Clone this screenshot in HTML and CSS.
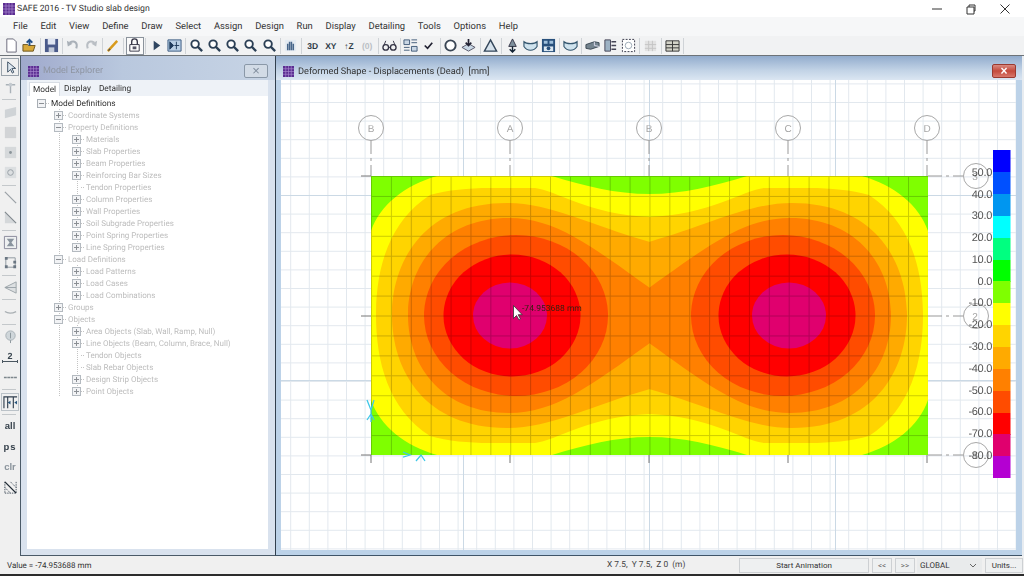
FILE: index.html
```html
<!DOCTYPE html>
<html lang="en">
<head>
<meta charset="utf-8">
<title>SAFE 2016 - TV Studio slab design</title>
<link rel="stylesheet" href="styles.css">
</head>
<body>
<svg class="defs" width="0" height="0" aria-hidden="true">
  <symbol id="appicon" viewBox="0 0 12 12">
    <rect width="12" height="12" fill="#5b2d91"/>
    <path d="M0 3h12M0 6h12M0 9h12M3 0v12M6 0v12M9 0v12" stroke="#a98bd0" stroke-width=".7"/>
  </symbol>
  <symbol id="zoom" viewBox="0 0 16 16">
    <circle cx="6.500" cy="6.500" r="4" fill="#fff" stroke="#2b3f55" stroke-width="2"/>
    <path d="M9.500 9.500l4.500 4.500" stroke="#2b3f55" stroke-width="2.400"/>
  </symbol>
  <symbol id="bowl" viewBox="0 0 16 16">
    <path d="M1 4c2 2 4 2 7 2s5 0 7-2v5c-2 3-4 4-7 4s-5-1-7-4z" fill="#cfe3ee" stroke="#33566e" stroke-width="1.200"/>
  </symbol>
</svg>

<header class="titlebar">
  <svg class="appicon"><use href="#appicon"/></svg>
  <span class="apptitle">SAFE 2016 - TV Studio slab design</span>
  <div class="winctl">
    <svg class="ctl" viewBox="0 0 12 12"><path d="M1 6h10" stroke="#333"/></svg>
    <svg class="ctl" viewBox="0 0 12 12"><path d="M2 4h7v7H2zM4 4V2h6v6H9" fill="none" stroke="#333"/></svg>
    <svg class="ctl" viewBox="0 0 12 12"><path d="M1.500 1.500l9 9M10.500 1.500l-9 9" stroke="#333"/></svg>
  </div>
</header>

<nav class="menubar">
  <span>File</span><span>Edit</span><span>View</span><span>Define</span><span>Draw</span><span>Select</span><span>Assign</span><span>Design</span><span>Run</span><span>Display</span><span>Detailing</span><span>Tools</span><span>Options</span><span>Help</span>
</nav>

<div class="toolbar">
  <i class="ti"><svg viewBox="0 0 16 16"><path d="M3 1h7l3 3v11H3z" fill="#fff" stroke="#667"/></svg></i>
  <i class="ti"><svg viewBox="0 0 16 16"><path d="M1 7h5l1 1h7l-2 6H1z" fill="#d8a93a" stroke="#6a5320"/><path d="M8 8V3M5 5l3-3 3 3" stroke="#1f4f8a" stroke-width="2" fill="none"/></svg></i>
  <b class="sep"></b>
  <i class="ti"><svg viewBox="0 0 16 16"><path d="M1 1h14v14H1z" fill="#4a5a8a"/><path d="M4 1h8v6H4z" fill="#dfe5f2"/><path d="M5 10h6v5H5z" fill="#c0c8d8"/></svg></i>
  <b class="sep"></b>
  <i class="ti"><svg viewBox="0 0 16 16"><path d="M5 5c5-3 9 0 7 6" fill="none" stroke="#a9b0b8" stroke-width="2.200"/><path d="M2 3l1 6 5-3z" fill="#a9b0b8"/></svg></i>
  <i class="ti"><svg viewBox="0 0 16 16"><path d="M11 5C6 2 2 5 4 11" fill="none" stroke="#b9bec4" stroke-width="2.200"/><path d="M14 3l-1 6-5-3z" fill="#b9bec4"/></svg></i>
  <b class="sep"></b>
  <i class="ti"><svg viewBox="0 0 16 16"><path d="M3 14L13 3" stroke="#d89a1c" stroke-width="2.600"/><path d="M3 14l1.500-3 1.500 1.500z" fill="#555"/></svg></i>
  <b class="sep"></b>
  <i class="ti ti-on"><svg viewBox="0 0 16 16"><path d="M3 7h10v7H3z" fill="#fff" stroke="#334"/><path d="M5 7V4a3 3 0 016 0v3" fill="none" stroke="#334" stroke-width="1.400"/><path d="M6 9h4v3H6z" fill="#556"/></svg></i>
  <b class="sep"></b>
  <i class="ti"><svg viewBox="0 0 16 16"><path d="M5 3l7 5-7 5z" fill="#2f4560"/></svg></i>
  <i class="ti"><svg viewBox="0 0 16 16"><path d="M1 2h14v12H1z" fill="#b8cfe6" stroke="#3a5a80"/><path d="M3 4l4 4-4 4zM10 4v8M13 8H8" stroke="#1d3a5c" fill="#1d3a5c"/></svg></i>
  <b class="sep"></b>
  <i class="ti"><svg><use href="#zoom"/></svg></i>
  <i class="ti"><svg><use href="#zoom"/></svg></i>
  <i class="ti"><svg><use href="#zoom"/></svg></i>
  <i class="ti"><svg><use href="#zoom"/></svg></i>
  <i class="ti"><svg><use href="#zoom"/></svg></i>
  <b class="sep"></b>
  <i class="ti"><svg viewBox="0 0 16 16"><path d="M2 2h12v12H2z" fill="#e4ebf2"/><path d="M5 13V6M7 13V4M9 13V4M11 13V6" stroke="#47668a" stroke-width="1.600"/></svg></i>
  <b class="sep"></b>
  <i class="ti tx">3D</i><i class="ti tx">XY</i><i class="ti tx">↑Z</i><i class="ti tx tx-off">(0)</i>
  <b class="sep"></b>
  <i class="ti"><svg viewBox="0 0 16 16"><circle cx="4" cy="10" r="3" fill="none" stroke="#334" stroke-width="1.400"/><circle cx="12" cy="10" r="3" fill="none" stroke="#334" stroke-width="1.400"/><path d="M7 10h2M2 8l2-5M14 8l-2-5" stroke="#334"/></svg></i>
  <b class="sep"></b>
  <i class="ti"><svg viewBox="0 0 16 16"><path d="M1 2h6v5H1zM9 9h6v5H9z" fill="#c9d6e4" stroke="#405a78"/><path d="M9 2h6M9 5h6M1 10h6M1 13h6" stroke="#405a78"/></svg></i>
  <i class="ti"><svg viewBox="0 0 16 16"><path d="M4 8l3 3 5-6" fill="none" stroke="#223" stroke-width="1.800"/></svg></i>
  <b class="sep"></b>
  <i class="ti"><svg viewBox="0 0 16 16"><circle cx="8" cy="8" r="5.500" fill="#fff" stroke="#3a4655" stroke-width="2"/></svg></i>
  <i class="ti"><svg viewBox="0 0 16 16"><path d="M8 6l7 4-7 4-7-4z" fill="#c9d8e6" stroke="#556"/><path d="M8 1v7M5 5l3 3 3-3" stroke="#223" stroke-width="1.800" fill="none"/></svg></i>
  <b class="sep"></b>
  <i class="ti"><svg viewBox="0 0 16 16"><path d="M8 2l6.500 12h-13z" fill="#d6e2ec" stroke="#33465a" stroke-width="1.500"/></svg></i>
  <b class="sep"></b>
  <i class="ti"><svg viewBox="0 0 16 16"><path d="M8 1L4 9h8z" fill="#7d8f9c" stroke="#334"/><path d="M8 9v6M5 12l3 3 3-3" stroke="#123" stroke-width="1.500" fill="none"/></svg></i>
  <i class="ti"><svg><use href="#bowl"/></svg></i>
  <i class="ti"><svg viewBox="0 0 16 16"><path d="M1 1h14v14H1z" fill="#28507c"/><path d="M3 9h10v5H3z" fill="#dce8f2"/><circle cx="8" cy="11" r="2" fill="#28507c"/><path d="M3 3h4v3H3zM9 3h4v3H9z" fill="#9fc0dc"/></svg></i>
  <b class="sep"></b>
  <i class="ti"><svg><use href="#bowl"/></svg></i>
  <b class="sep"></b>
  <i class="ti"><svg viewBox="0 0 16 16"><path d="M1 7l9-3 5 1v4l-9 3-5-1z" fill="#75848f" stroke="#3a4652"/><path d="M10 4v4l5 1" stroke="#dde" fill="none"/></svg></i>
  <i class="ti"><svg viewBox="0 0 16 16"><path d="M2 2h6v12H2z" fill="#9db2c4" stroke="#445"/><path d="M9 4h5M9 8h5M9 12h5" stroke="#445" stroke-width="1.500"/></svg></i>
  <i class="ti"><svg viewBox="0 0 16 16"><path d="M1.500 1.500h13v13h-13z" fill="#fff" stroke="#334" stroke-dasharray="2 1.500"/><circle cx="8" cy="8" r="3.500" fill="none" stroke="#9aa8b4"/></svg></i>
  <b class="sep"></b>
  <i class="ti"><svg viewBox="0 0 16 16"><path d="M2 3h12v11H2z" fill="#e2e2e2"/><path d="M2 7h12M2 11h12M6 3v11M10 3v11" stroke="#c4c4c4"/></svg></i>
  <b class="sep"></b>
  <i class="ti"><svg viewBox="0 0 16 16"><path d="M1 3h14v11H1z" fill="#d3d3c8" stroke="#333"/><path d="M8 3v11M1 7h14M1 10.500h14" stroke="#333"/></svg></i>
  <b class="sep"></b>
</div>

<main class="workspace">
  <aside class="sidetools">
    <i class="si si-on"><svg viewBox="0 0 16 16"><path d="M5 2v11l3-3 2 4 1.500-1-2-4h4z" fill="#dfe8f0" stroke="#3d4f62"/></svg></i>
    <i class="si"><svg viewBox="0 0 16 16"><path d="M3 5h10M8 5v9" stroke="#aab2b8" stroke-width="1.500"/><circle cx="8" cy="5" r="2" fill="#c5cbd0"/></svg></i>
    <b class="hsep"></b>
    <i class="si"><svg viewBox="0 0 16 16"><path d="M2 5l12-3v9l-12 3z" fill="#cfd3d6"/></svg></i>
    <i class="si"><svg viewBox="0 0 16 16"><path d="M2 2h12v12H2z" fill="#d2d4d6"/></svg></i>
    <i class="si"><svg viewBox="0 0 16 16"><path d="M2 2h12v12H2z" fill="#d6d9db"/><circle cx="8" cy="8" r="1.500" fill="#8b949a"/></svg></i>
    <i class="si"><svg viewBox="0 0 16 16"><path d="M2 2h12v12H2z" fill="#dcdfe1"/><circle cx="8" cy="8" r="3" fill="none" stroke="#969ea4"/></svg></i>
    <b class="hsep"></b>
    <i class="si"><svg viewBox="0 0 16 16"><path d="M2 2l12 12" stroke="#9aa1a6" stroke-width="1.400"/></svg></i>
    <i class="si"><svg viewBox="0 0 16 16"><path d="M2 2v12h12z" fill="#d5d8da"/><path d="M2 2l12 12" stroke="#7f878c" stroke-width="1.200"/></svg></i>
    <b class="hsep"></b>
    <i class="si"><svg viewBox="0 0 16 16"><path d="M1.500 1.500h13v13h-13z" fill="#eef0f1" stroke="#889"/><path d="M4 4h8L9 8l3 4H4l3-4z" fill="#8a949e"/></svg></i>
    <i class="si"><svg viewBox="0 0 16 16"><path d="M3 3h10v10H3z" fill="none" stroke="#8d969e"/><path d="M2 2h3v3H2zM11 6h3v3h-3zM2 11h3v3H2zM11 11h3v3h-3z" fill="#6a7682"/></svg></i>
    <b class="hsep"></b>
    <i class="si"><svg viewBox="0 0 16 16"><path d="M2 8l12-6v12z" fill="#dde0e2" stroke="#9aa2a8"/><path d="M2 8h12" stroke="#9aa2a8"/></svg></i>
    <b class="hsep"></b>
    <i class="si"><svg viewBox="0 0 16 16"><path d="M2 7c3 2 8 2 12 0" fill="none" stroke="#a9afb3" stroke-width="1.400"/></svg></i>
    <b class="hsep"></b>
    <i class="si"><svg viewBox="0 0 16 16"><circle cx="8" cy="7" r="5" fill="#cfd6da" stroke="#a8b0b5"/><path d="M8 4v6M8 12v3" stroke="#8a949a"/></svg></i>
    <i class="si si-num">2</i>
    <i class="si"><svg viewBox="0 0 16 16"><path d="M1 8h14" stroke="#7d868c" stroke-width="1.800" stroke-dasharray="3 .6"/></svg></i>
    <b class="hsep"></b>
    <i class="si si-box"><svg viewBox="0 0 16 16"><path d="M1 14V2h14M5 2v12M11 2v12" fill="none" stroke="#2f3d4c" stroke-width="1.200"/><path d="M5 8l3-2v4zM15 6l-3 2 3 2z" fill="#28557c"/></svg></i>
    <b class="hsep"></b>
    <i class="si si-txt">all</i>
    <i class="si si-txt si-wide">ps</i>
    <i class="si si-txt si-dim">clr</i>
    <i class="si"><svg viewBox="0 0 16 16"><path d="M2 2l12 12M2 14h12M2 2v12M14 2v12M8 2l6 6M2 8l6 6" fill="none" stroke="#475360" stroke-dasharray="1.500 1"/><path d="M2 2l12 12" stroke="#222c36" stroke-width="1.500"/></svg></i>
  </aside>

  <section class="explorer">
    <div class="explorer-title">
      <svg class="winicon"><use href="#appicon"/></svg>
      <span class="explorer-name">Model Explorer</span>
      <button class="explorer-close" type="button">×</button>
    </div>
    <div class="tabs">
      <span class="tab tab-on">Model</span><span class="tab">Display</span><span class="tab">Detailing</span>
    </div>
    <div class="treepane">
      <ul class="tree root">
        <li><div class="row row-main"><span class="box minus"></span><span class="dash"></span>Model Definitions</div>
          <ul class="tree">
            <li><div class="row"><span class="box plus"></span><span class="dash"></span>Coordinate Systems</div></li>
            <li><div class="row"><span class="box minus"></span><span class="dash"></span>Property Definitions</div>
              <ul class="tree">
                <li><div class="row"><span class="box plus"></span><span class="dash"></span>Materials</div></li>
                <li><div class="row"><span class="box plus"></span><span class="dash"></span>Slab Properties</div></li>
                <li><div class="row"><span class="box plus"></span><span class="dash"></span>Beam Properties</div></li>
                <li><div class="row"><span class="box plus"></span><span class="dash"></span>Reinforcing Bar Sizes</div></li>
                <li><div class="row"><span class="nobox"></span><span class="dash"></span>Tendon Properties</div></li>
                <li><div class="row"><span class="box plus"></span><span class="dash"></span>Column Properties</div></li>
                <li><div class="row"><span class="box plus"></span><span class="dash"></span>Wall Properties</div></li>
                <li><div class="row"><span class="box plus"></span><span class="dash"></span>Soil Subgrade Properties</div></li>
                <li><div class="row"><span class="box plus"></span><span class="dash"></span>Point Spring Properties</div></li>
                <li><div class="row"><span class="box plus"></span><span class="dash"></span>Line Spring Properties</div></li>
              </ul>
            </li>
            <li><div class="row"><span class="box minus"></span><span class="dash"></span>Load Definitions</div>
              <ul class="tree">
                <li><div class="row"><span class="box plus"></span><span class="dash"></span>Load Patterns</div></li>
                <li><div class="row"><span class="box plus"></span><span class="dash"></span>Load Cases</div></li>
                <li><div class="row"><span class="box plus"></span><span class="dash"></span>Load Combinations</div></li>
              </ul>
            </li>
            <li><div class="row"><span class="box plus"></span><span class="dash"></span>Groups</div></li>
            <li><div class="row"><span class="box minus"></span><span class="dash"></span>Objects</div>
              <ul class="tree">
                <li><div class="row"><span class="box plus"></span><span class="dash"></span>Area Objects (Slab, Wall, Ramp, Null)</div></li>
                <li><div class="row"><span class="box plus"></span><span class="dash"></span>Line Objects (Beam, Column, Brace, Null)</div></li>
                <li><div class="row"><span class="nobox"></span><span class="dash"></span>Tendon Objects</div></li>
                <li><div class="row"><span class="nobox"></span><span class="dash"></span>Slab Rebar Objects</div></li>
                <li><div class="row"><span class="box plus"></span><span class="dash"></span>Design Strip Objects</div></li>
                <li><div class="row"><span class="box plus"></span><span class="dash"></span>Point Objects</div></li>
              </ul>
            </li>
          </ul>
        </li>
      </ul>
    </div>
  </section>

  <section class="gwin">
    <div class="gwin-title">
      <svg class="winicon"><use href="#appicon"/></svg>
      <span class="gwin-name">Deformed Shape - Displacements (Dead)&nbsp; [mm]</span>
      <button class="gwin-close" type="button">×</button>
    </div>
    <div class="gwin-body">
      <svg class="canvas" viewBox="281 80 735 470" xmlns="http://www.w3.org/2000/svg">
        <defs>
          <pattern id="gridbg" patternUnits="userSpaceOnUse" x="290.200" y="83.400" width="18.600" height="18.600">
            <path d="M.5 0v18.600M0 .5h18.600" stroke="#e2e8ee" stroke-width="1" fill="none"/>
          </pattern>
          <pattern id="gridslab" patternUnits="userSpaceOnUse" x="371" y="176" width="19.890" height="19.930">
            <path d="M.5 0v19.930M0 .5h19.890" stroke="#000" stroke-opacity=".2" stroke-width="1" fill="none"/>
          </pattern>
          <g id="quarter">
            <path fill="#ffff00" d="M371 231C380 205 405 185 437 176L552 176C585 186 615 194 650 194L650 316L371 316Z"/>
            <path fill="#ffd400" d="M376 316C376 270 388 222 430 195C448 190 468 188 490 188L535 188C555 190 590 215 650 217L650 316Z"/>
            <path fill="#ffaa00" d="M392 316C392 260 425 203 507 203C550 203 590 225 650 242L650 316Z"/>
            <path fill="#ff8000" d="M408 316C408 262 445 218 509 218C555 218 590 245 650 288L650 316Z"/>
          </g>
          <g id="lobe">
            <ellipse cx="516" cy="315.500" rx="92" ry="80.500" fill="#ff4c00"/>
            <ellipse cx="512" cy="315.500" rx="68.500" ry="61" fill="#ff0000"/>
            <ellipse cx="510" cy="315.500" rx="37" ry="33" fill="#e0006e"/>
          </g>
        </defs>
        <rect x="281" y="80" width="735" height="470" fill="#fff"/>
        <rect x="281" y="80" width="735" height="470" fill="url(#gridbg)"/>
        <path class="major" d="M463.500 80v470M649.500 80v470M835.500 80v470M281 195.500h735M281 380.500h735"/>

        <rect x="371" y="176" width="557" height="279" fill="#7fff00"/>
        <use href="#quarter"/>
        <use href="#quarter" transform="matrix(-1 0 0 1 1299 0)"/>
        <use href="#quarter" transform="matrix(1 0 0 -1 0 631)"/>
        <use href="#quarter" transform="matrix(-1 0 0 -1 1299 631)"/>
        <use href="#lobe"/>
        <use href="#lobe" transform="matrix(-1 0 0 1 1299 0)"/>
        <rect x="371" y="176" width="557" height="279" fill="url(#gridslab)"/>

        <path class="axis" d="M371 140v36M510 140v36M649 140v36M788 140v36M927 140v36M928 176h35M928 316h35M928 455h35"/>
        <path class="tick" d="M371 455v8M510 455v8M649 455v8M788 455v8M927 455v8M361 176h10M361 316h10M361 455h10"/>
        <g class="bubble">
          <circle cx="371" cy="128" r="12.500"/><circle cx="510" cy="128" r="12.500"/><circle cx="649" cy="128" r="12.500"/><circle cx="788" cy="128" r="12.500"/><circle cx="927" cy="128" r="12.500"/>
          <circle cx="976" cy="176" r="12.500"/><circle cx="976" cy="316" r="12.500"/><circle cx="976" cy="455" r="12.500"/>
        </g>
        <g class="bubbletxt">
          <text x="371" y="132">B</text><text x="510" y="132">A</text><text x="649" y="132">B</text><text x="788" y="132">C</text><text x="927" y="132">D</text>
          <text x="975" y="180">3</text><text x="975" y="320">2</text><text x="975" y="459">1</text>
        </g>

        <path class="support" d="M367 400l4 10 3-10M371 410v12M367 420l4-6 3 6M403 457l7-2-7-3M416 461l5-6 4 6"/>

        <g class="legendbar">
          <rect x="993" y="150" width="17.500" height="22" fill="#0000ff"/>
          <rect x="993" y="172" width="17.500" height="22" fill="#0050ff"/>
          <rect x="993" y="194" width="17.500" height="22" fill="#0096f0"/>
          <rect x="993" y="216" width="17.500" height="22" fill="#00ffff"/>
          <rect x="993" y="238" width="17.500" height="22" fill="#00ff80"/>
          <rect x="993" y="260" width="17.500" height="22" fill="#00ff00"/>
          <rect x="993" y="281" width="17.500" height="22" fill="#7fff00"/>
          <rect x="993" y="303" width="17.500" height="22" fill="#ffff00"/>
          <rect x="993" y="325" width="17.500" height="22" fill="#ffd400"/>
          <rect x="993" y="347" width="17.500" height="22" fill="#ffaa00"/>
          <rect x="993" y="369" width="17.500" height="22" fill="#ff8000"/>
          <rect x="993" y="391" width="17.500" height="22" fill="#ff4c00"/>
          <rect x="993" y="413" width="17.500" height="22" fill="#ff0000"/>
          <rect x="993" y="434" width="17.500" height="22" fill="#e0006e"/>
          <rect x="993" y="456" width="17.500" height="22" fill="#b400d2"/>
        </g>
        <g class="legendtxt">
          <text x="992" y="176">50.0</text><text x="992" y="198">40.0</text><text x="992" y="219">30.0</text><text x="992" y="241">20.0</text><text x="992" y="263">10.0</text><text x="992" y="285">0.0</text><text x="992" y="306">-10.0</text><text x="992" y="328">-20.0</text><text x="992" y="350">-30.0</text><text x="992" y="372">-40.0</text><text x="992" y="394">-50.0</text><text x="992" y="415">-60.0</text><text x="992" y="437">-70.0</text><text x="992" y="459">-80.0</text>
        </g>
        <text class="probe" x="522" y="311">-74.953688 mm</text>
        <path d="M513.500 305.500v13l3-3 2.500 4.500 1.500-1-2.300-4.300h4z" fill="#fff" stroke="#333" stroke-width=".8"/>
      </svg>
    </div>
  </section>
  <div class="rightgap"></div>
</main>

<footer class="statusbar">
  <span class="st-value">Value = -74.953688 mm</span>
  <span class="st-coord">X 7.5,&nbsp; Y 7.5,&nbsp; Z 0&nbsp; (m)</span>
  <button class="st-btn st-anim" type="button">Start Animation</button>
  <button class="st-btn st-nav" type="button">&lt;&lt;</button>
  <button class="st-btn st-nav" type="button">&gt;&gt;</button>
  <span class="st-combo">GLOBAL<svg class="st-arrow" viewBox="0 0 8 5"><path d="M1 1l3 3 3-3" fill="none" stroke="#666"/></svg></span>
  <button class="st-btn st-units" type="button">Units...</button>
</footer>
</body>
</html>
```

FILE: styles.css
```css
* { box-sizing: border-box; }
html, body { margin: 0; padding: 0; }
body {
  width: 1024px;
  height: 576px;
  overflow: hidden;
  display: flex;
  flex-direction: column;
  background: #f0f0f0;
  font-family: Roboto, "Liberation Sans", Arial, sans-serif;
  color: #2a2a2a;
  border-bottom: 2px solid #2c2c2c;
  text-rendering: geometricPrecision;
  filter: blur(.3px);
}
.defs { position: absolute; }

.titlebar { height: 17px; flex: none; display: flex; align-items: center; background: #fff; padding-left: 3px; }
.appicon { width: 12px; height: 12px; }
.apptitle { margin-left: 2px; font-size: 8.700px; color: #333; }
.winctl { margin-left: auto; display: flex; gap: 22px; padding-right: 13px; }
.ctl { width: 12px; height: 12px; }

.menubar { height: 19px; flex: none; display: flex; align-items: center; background: #f6f7f8; padding-left: 13px; gap: 12.750px; font-size: 9.400px; color: #333; }

.toolbar { height: 19px; flex: none; display: flex; align-items: center; background: #f1f2f3; padding-left: 2px; }
.ti { flex: none; width: 18.200px; height: 18px; display: flex; align-items: center; justify-content: center; font-style: normal; }
.ti svg { width: 15px; height: 15px; }
.ti-on { outline: 1px solid #8b939c; outline-offset: -1px; background: #fafafa; }
.tx { font: bold 8.500px "Liberation Sans", sans-serif; color: #2d3a46; }
.tx-off { color: #b9bec4; }
.sep { flex: none; width: 3.600px; height: 16px; position: relative; }
.sep::after { content: ""; position: absolute; left: 1.500px; top: 0; width: 1px; height: 16px; background: #cfd3d7; }

.workspace { flex: 1; min-height: 0; display: flex; border-top: 1px solid #6d7378; }

.sidetools { width: 20px; flex: none; display: flex; flex-direction: column; padding-top: 1px; background: #f0f0f0; }
.si { height: 20.200px; flex: none; display: flex; align-items: center; justify-content: center; font-style: normal; }
.si svg { width: 15px; height: 15px; }
.si-on { outline: 1px solid #9aa3ab; outline-offset: -2px; }
.si-box { outline: 1px solid #bbc2c8; outline-offset: -2px; }
.si-num { font: bold 9px "Liberation Sans", sans-serif; color: #39454f; position: relative; padding-bottom: 3px; }
.si-num::after { content: ""; position: absolute; left: 2px; right: 2px; bottom: 4px; height: 3px; border: solid #4a5660; border-width: 0 1px; background: linear-gradient(#4a5660, #4a5660) center / 100% 1px no-repeat; }
.si-txt { font: bold 9.500px "Liberation Sans", sans-serif; color: #3b4650; }
.si-wide { letter-spacing: 1px; }
.si-dim { color: #8b949c; }
.hsep { height: 4.600px; flex: none; position: relative; }
.hsep::after { content: ""; position: absolute; left: 2px; right: 4px; top: 2px; height: 1px; background: #c4c8cb; }

.explorer { width: 256px; flex: none; display: flex; flex-direction: column; background: #d9e2ee; border-left: 1px solid #4a5a68; border-right: 1px solid #32404e; border-bottom: 1px solid #4a5a68; padding: 0 7px 6px 6px; }
.explorer-title { height: 24px; flex: none; display: flex; align-items: center; margin: 0 -7px 0 -6px; padding: 6px 7px 0 7px; background: linear-gradient(90deg, #9fa9cc, #b9c8de 40%, #c7d4e5); }
.winicon { width: 11px; height: 11px; flex: none; }
.explorer-name { margin-left: 4px; font-size: 9px; color: #8e95a2; }
.explorer-close { margin-left: auto; width: 24px; height: 14px; padding: 0; background: #d2dbe6; border: 1px solid #8a98a8; border-radius: 2px; color: #7f8c9c; font: 13px/10px "Liberation Sans", sans-serif; }
.tabs { height: 16px; flex: none; display: flex; align-items: flex-end; background: #eef2f7; padding-left: 2px; font-size: 8.300px; }
.tab { padding: 0 4px; height: 14px; line-height: 15px; color: #333; }
.tab-on { background: #fff; border: 1px solid #d8dde4; border-bottom: 0; padding: 0 3px; line-height: 14px; }
.treepane { flex: 1; min-height: 0; background: #fff; padding: 1px 0 0 10px; overflow: hidden; }
.tree { list-style: none; margin: 0; padding: 0; }
.tree .tree { margin-left: 22px; background: linear-gradient(#c4c4c4 50%, transparent 50%) left top / 1px 2px repeat-y; }
.tree.root { margin-left: 0; }
.tree .tree .tree { margin-left: 18px; }
.row { height: 12px; display: flex; align-items: center; white-space: nowrap; font-size: 8px; color: #bdbdbd; margin-left: -5px; }
.row-main { color: #2f2f2f; margin-left: 0; font-size: 8.300px; padding-top: 1px; }
.box { width: 9px; height: 9px; flex: none; border: 1px solid #b4bac0; background: #f2f3f5; position: relative; }
.row-main .box { border-color: #a8aeb4; }
.box::before { content: ""; position: absolute; left: 1px; right: 1px; top: 3px; height: 1px; background: #8b8f94; }
.plus::after { content: ""; position: absolute; top: 1px; bottom: 1px; left: 3px; width: 1px; background: #8b8f94; }
.nobox { width: 9px; flex: none; }
.dash { width: 4px; margin: 0 1px 0 0; flex: none; height: 1px; background: linear-gradient(90deg, #c4c4c4 50%, transparent 50%) left / 2px 1px repeat-x; }

.gwin { flex: 1; min-width: 0; display: flex; flex-direction: column; border-bottom: 1px solid #3f5468; }
.gwin-title { height: 24px; flex: none; display: flex; align-items: center; padding: 6px 6px 0 7px; background: linear-gradient(#92accd, #c2d3e6 60%, #dbe6f2); }
.gwin-name { margin-left: 4px; font-size: 9.200px; color: #333; }
.gwin-close { margin-left: auto; width: 24px; height: 14px; padding: 0; background: linear-gradient(#d98a80, #c44a3c 50%, #d8776b); border: 1px solid #9b3a30; border-radius: 2px; color: #fff; font: bold 12px/10px "Liberation Sans", sans-serif; }
.gwin-body { flex: 1; min-height: 0; background: #bcd2e8; padding: 0 5px 3px 5px; }
.canvas { display: block; width: 735px; height: 470px; }
.rightgap { width: 2px; flex: none; background: #e8ecf0; }

.major { stroke: #cbd9e5; stroke-width: 1; fill: none; }
.axis { stroke: #999; stroke-width: 1; stroke-dasharray: 14 4 3 4; fill: none; }
.tick { stroke: #777; stroke-width: 1; fill: none; }
.bubble circle { fill: none; stroke: #a8a8a8; stroke-width: 1; }
.bubbletxt text { font: 10px "Liberation Sans", sans-serif; fill: #a5a5a5; text-anchor: middle; }
.legendtxt text { font: 11px "Liberation Sans", sans-serif; letter-spacing: -.3px; fill: #555; text-anchor: end; }
.probe { font: 8.500px Roboto, sans-serif; fill: #3a2010; }
.support { fill: none; stroke: #3fc8e8; stroke-width: 1.300; }

.statusbar { height: 18px; flex: none; display: flex; align-items: center; background: #f0f0f0; font-size: 8px; color: #333; padding-left: 7px; padding-right: 1px; }
.st-value { width: 600px; flex: none; }
.st-coord { width: 132px; flex: none; color: #444; font-size: 8.400px; }
.st-btn { height: 15px; padding: 0; flex: none; background: #eef0f1; border: 1px solid #cdd0d3; font: 8px Roboto, sans-serif; color: #333; }
.st-anim { width: 130px; }
.st-nav { width: 20px; margin-left: 3px; color: #666; }
.st-combo { margin-left: 2px; width: 65px; height: 15px; display: flex; align-items: center; padding-left: 3px; background: #e9ebec; flex: none; font-size: 8px; }
.st-arrow { width: 8px; height: 5px; margin-left: auto; margin-right: 5px; }
.st-units { width: 38px; margin-left: 3px; }
```
